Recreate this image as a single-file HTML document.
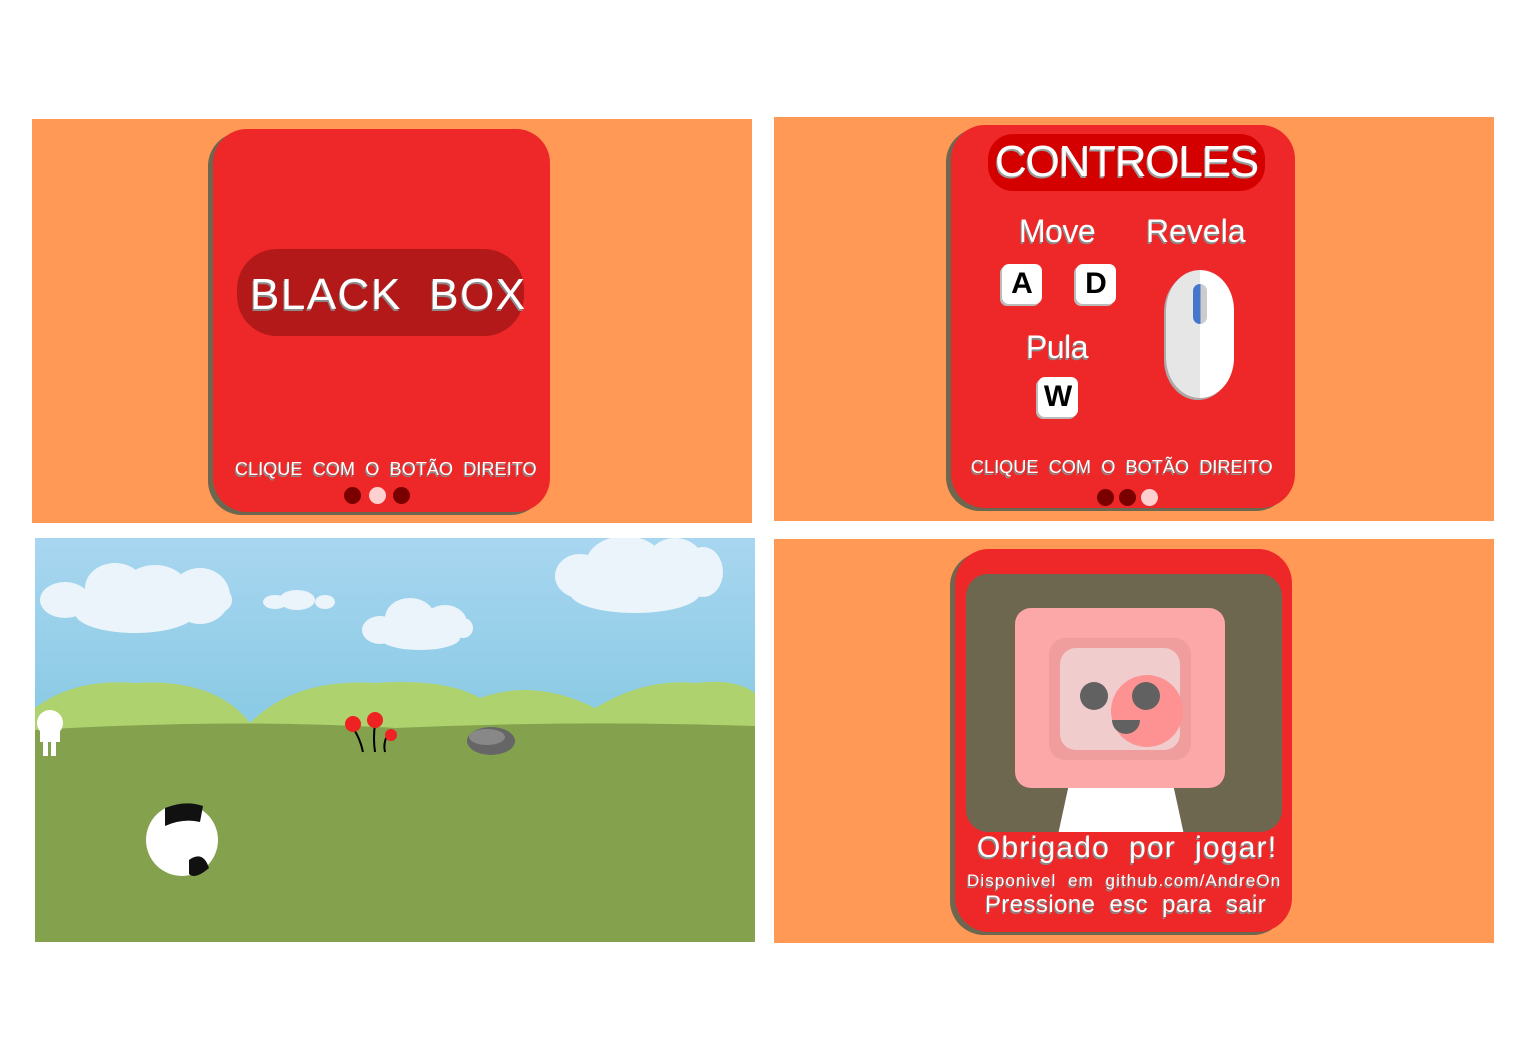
<!DOCTYPE html>
<html><head><meta charset="utf-8"><style>
body{margin:0;width:1520px;height:1040px;background:#fff;position:relative;overflow:hidden;font-family:"Liberation Sans",sans-serif}
.a{position:absolute}
.o{background:#ff9955}
.card{position:absolute;background:#ee2828;border-radius:34px;box-shadow:-5px 3px 0 #6e6750}
.t{position:absolute;color:#fff;font-weight:bold;text-shadow:-1px 2px 0 #8a8a8a;white-space:nowrap}
.key{position:absolute;width:40px;height:40px;background:#fff;border-radius:7px;box-shadow:-2px 2px 0 #bbb;font:bold 30px "Liberation Sans",sans-serif;text-align:center;line-height:40px;color:#000}
.dot{position:absolute;width:17px;height:17px;border-radius:50%}
</style></head><body>
<!-- Panel 1 -->
<div class="a o" style="left:32px;top:119px;width:720px;height:404px"></div>
<div class="card" style="left:213px;top:129px;width:337px;height:383px"></div>
<div class="a" style="left:237px;top:249px;width:287px;height:87px;background:#b31919;border-radius:40px"></div>
<div class="t" style="left:250px;top:270px;font-size:44px;font-weight:normal;letter-spacing:1.5px">BLACK&nbsp;&nbsp;BOX</div>
<div class="t" style="left:235px;top:459px;font-size:18px;font-weight:normal;letter-spacing:0.1px">CLIQUE&nbsp; COM&nbsp; O&nbsp; BOTÃO&nbsp; DIREITO</div>
<div class="dot" style="left:344px;top:487px;background:#7a0000"></div>
<div class="dot" style="left:369px;top:487px;background:#ffd0d0"></div>
<div class="dot" style="left:393px;top:487px;background:#7a0000"></div>
<!-- Panel 2 -->
<div class="a o" style="left:774px;top:117px;width:720px;height:404px"></div>
<div class="card" style="left:951px;top:125px;width:344px;height:383px"></div>
<div class="a" style="left:988px;top:134px;width:277px;height:57px;background:#d40000;border-radius:25px"></div>
<div class="t" style="left:995px;top:137px;font-size:44px;font-weight:normal;text-shadow:-1px 2px 0 #999;letter-spacing:-1.2px">CONTROLES</div>
<div class="t" style="left:1019px;top:213px;font-size:32px;font-weight:normal;letter-spacing:-0.5px">Move</div>
<div class="t" style="left:1146px;top:213px;font-size:32px;font-weight:normal;letter-spacing:0px">Revela</div>
<div class="t" style="left:1026px;top:329px;font-size:32px;font-weight:normal;letter-spacing:-0.5px">Pula</div>
<div class="key" style="left:1002px;top:264px">A</div>
<div class="key" style="left:1076px;top:264px">D</div>
<div class="key" style="left:1038px;top:377px">W</div>
<div class="a" style="left:1166px;top:270px;width:68px;height:128px;border-radius:34px/40px;background:linear-gradient(90deg,#e6e6e6 50%,#fff 50%);box-shadow:-2px 2px 0 #aaa"></div>
<div class="a" style="left:1193px;top:284px;width:14px;height:40px;border-radius:7px;background:linear-gradient(90deg,#4477cc 55%,#ccc 55%)"></div>
<div class="t" style="left:971px;top:457px;font-size:18px;font-weight:normal;letter-spacing:0.1px">CLIQUE&nbsp; COM&nbsp; O&nbsp; BOTÃO&nbsp; DIREITO</div>
<div class="dot" style="left:1097px;top:489px;background:#7a0000"></div>
<div class="dot" style="left:1119px;top:489px;background:#7a0000"></div>
<div class="dot" style="left:1141px;top:489px;background:#ffd0d0"></div>
<!-- Panel 3 -->
<div class="a" style="left:35px;top:538px;width:720px;height:404px;overflow:hidden;background:linear-gradient(#a8d6f0,#8ccbe5 170px)">
<svg width="720" height="404" style="position:absolute;left:0;top:0">
<g fill="#eaf4fa">
<ellipse cx="30" cy="62" rx="25" ry="18"/><ellipse cx="80" cy="50" rx="30" ry="25"/><ellipse cx="120" cy="55" rx="35" ry="28"/><ellipse cx="165" cy="58" rx="30" ry="28"/><ellipse cx="185" cy="62" rx="12" ry="12"/><ellipse cx="100" cy="75" rx="60" ry="20"/>
<ellipse cx="240" cy="64" rx="12" ry="7"/><ellipse cx="262" cy="62" rx="18" ry="10"/><ellipse cx="290" cy="64" rx="10" ry="7"/>
<ellipse cx="345" cy="92" rx="18" ry="14"/><ellipse cx="375" cy="80" rx="25" ry="20"/><ellipse cx="410" cy="85" rx="22" ry="18"/><ellipse cx="428" cy="90" rx="10" ry="10"/><ellipse cx="385" cy="100" rx="40" ry="12"/>
<ellipse cx="545" cy="38" rx="25" ry="22"/><ellipse cx="590" cy="28" rx="40" ry="30"/><ellipse cx="640" cy="28" rx="30" ry="28"/><ellipse cx="668" cy="34" rx="20" ry="25"/><ellipse cx="600" cy="55" rx="65" ry="20"/>
</g>
<path d="M0 170 Q40 140 100 145 Q180 140 215 185 Q260 140 340 145 Q410 140 445 160 Q500 140 560 170 Q610 140 660 145 Q700 140 720 155 V220 H0Z" fill="#aed36e"/>
<path d="M0 192 Q200 180 360 190 Q540 182 720 188 V404 H0Z" fill="#84a24e"/>
<ellipse cx="456" cy="203" rx="24" ry="14" fill="#666"/><ellipse cx="452" cy="199" rx="18" ry="8" fill="#888"/>
<g stroke="#000" stroke-width="2" fill="none"><path d="M318 190 Q325 200 328 214"/><path d="M340 186 Q338 200 340 214"/><path d="M352 198 Q348 206 350 214"/></g>
<g fill="#e22"><circle cx="318" cy="186" r="8"/><circle cx="340" cy="182" r="8"/><circle cx="356" cy="197" r="6"/></g>
<circle cx="147" cy="302" r="36" fill="#fff"/>
<path d="M130 270 Q150 262 168 268 L165 284 Q148 280 130 288Z" fill="#111"/>
<path d="M154 322 Q168 312 174 330 Q160 342 154 336Z" fill="#111"/>
<circle cx="15" cy="185" r="13" fill="#fff"/><rect x="5" y="190" width="20" height="14" fill="#fff"/><rect x="8" y="204" width="5" height="14" fill="#fff"/><rect x="16" y="204" width="5" height="14" fill="#fff"/>
</svg></div>
<!-- Panel 4 -->
<div class="a o" style="left:774px;top:539px;width:720px;height:404px"></div>
<div class="card" style="left:955px;top:549px;width:337px;height:383px"></div>
<div class="a" style="left:966px;top:574px;width:316px;height:258px;background:#6e6750;border-radius:22px;overflow:hidden">
<div class="a" style="left:90px;top:210px;width:130px;height:60px;background:#fff;clip-path:polygon(10% 0,90% 0,100% 100%,0 100%)"></div>
<div class="a" style="left:49px;top:34px;width:210px;height:180px;background:#fca8a8;border-radius:16px"></div>
<div class="a" style="left:83px;top:64px;width:142px;height:122px;background:#f09d9d;border-radius:16px"></div>
<div class="a" style="left:94px;top:74px;width:120px;height:102px;background:#f0cccc;border-radius:16px"></div>
<div class="a" style="left:145px;top:101px;width:72px;height:72px;background:#fe9191;border-radius:50%"></div>
<div class="a" style="left:114px;top:108px;width:28px;height:28px;background:#616161;border-radius:50%"></div>
<div class="a" style="left:166px;top:108px;width:28px;height:28px;background:#616161;border-radius:50%"></div>
<div class="a" style="left:146px;top:146px;width:28px;height:14px;background:#616161;border-radius:0 0 14px 14px"></div>
</div>
<div class="t" style="left:977px;top:831px;font-size:30px;font-weight:normal;letter-spacing:1.2px">Obrigado&nbsp; por&nbsp; jogar!</div>
<div class="t" style="left:967px;top:871px;font-size:17px;font-weight:normal;letter-spacing:1.1px">Disponivel&nbsp; em&nbsp; github.com/AndreOn</div>
<div class="t" style="left:985px;top:891px;font-size:24px;font-weight:normal;letter-spacing:0.4px">Pressione&nbsp; esc&nbsp; para&nbsp; sair</div>
</body></html>
